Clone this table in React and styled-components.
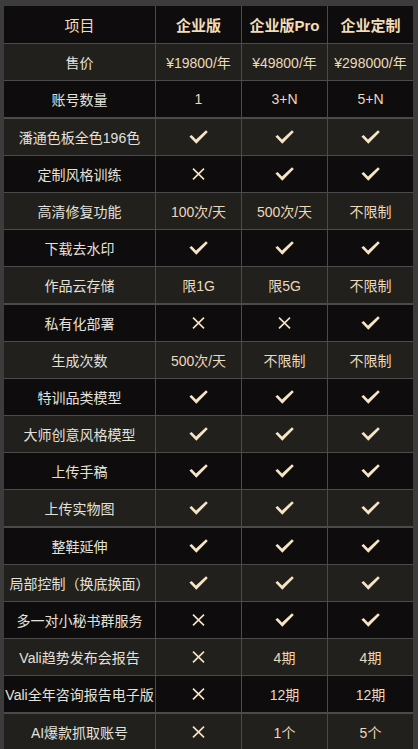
import React from "react";
import styled, { createGlobalStyle } from "styled-components";

const Global = createGlobalStyle`
  html, body {
    margin: 0;
    padding: 0;
    background: #3c3c3c;
  }
  body {
    font-family: "Liberation Sans", "Noto Sans CJK SC", sans-serif;
  }
`;

const Page = styled.div`
  padding: 6px 5px 0 4px;
`;

const Table = styled.div`
  display: flex;
  flex-direction: column;
  row-gap: 1.2px;
  background: #4b4b4b;
`;

const Row = styled.div`
  display: grid;
  grid-template-columns: 151px 85px 85px 85px;
  column-gap: 1px;
  height: ${(p) => (p.$header ? "37px" : "36px")};
`;

const Cell = styled.div`
  display: flex;
  align-items: center;
  justify-content: center;
  white-space: nowrap;
  overflow: visible;
  background: ${(p) => (p.$tone === "light" ? "#21201d" : "#0e0c0d")};
  font-size: 14px;
  color: ${(p) => (p.$label ? "#e4e1db" : "#ead9bb")};
`;

const HeadCell = styled(Cell)`
  background: #0e0c0d;
  color: #f2dcb8;
  font-size: 15px;
  font-weight: ${(p) => (p.$plain ? 400 : 700)};
`;

const Check = () => (
  <svg width="19" height="14" viewBox="0 0 19 14">
    <path
      d="M0.4 6.6 L2.6 4.9 L7 9.6 L17 0.2 L18.8 1.9 L7.3 13.7 Z"
      fill="#f6e4c4"
    />
  </svg>
);

const Cross = () => (
  <svg width="13" height="12" viewBox="0 0 13 12">
    <path
      d="M1 0.6 L12 11.4 M12 0.6 L1 11.4"
      stroke="#f6e4c4"
      strokeWidth="1.6"
      fill="none"
    />
  </svg>
);

const Y = "Y";
const N = "N";

const rows = [
  ["售价", "¥19800/年", "¥49800/年", "¥298000/年"],
  ["账号数量", "1", "3+N", "5+N"],
  ["潘通色板全色196色", Y, Y, Y],
  ["定制风格训练", N, Y, Y],
  ["高清修复功能", "100次/天", "500次/天", "不限制"],
  ["下载去水印", Y, Y, Y],
  ["作品云存储", "限1G", "限5G", "不限制"],
  ["私有化部署", N, N, Y],
  ["生成次数", "500次/天", "不限制", "不限制"],
  ["特训品类模型", Y, Y, Y],
  ["大师创意风格模型", Y, Y, Y],
  ["上传手稿", Y, Y, Y],
  ["上传实物图", Y, Y, Y],
  ["整鞋延伸", Y, Y, Y],
  ["局部控制（换底换面）", Y, Y, Y],
  ["多一对小秘书群服务", N, Y, Y],
  ["Vali趋势发布会报告", N, "4期", "4期"],
  ["Vali全年咨询报告电子版", N, "12期", "12期"],
  ["AI爆款抓取账号", N, "1个", "5个"],
];

const renderValue = (v) => (v === Y ? <Check /> : v === N ? <Cross /> : v);

export default function App() {
  return (
    <Page>
      <Global />
      <Table>
        <Row $header>
          <HeadCell $plain>项目</HeadCell>
          <HeadCell>企业版</HeadCell>
          <HeadCell>企业版Pro</HeadCell>
          <HeadCell>企业定制</HeadCell>
        </Row>
        {rows.map((r, i) => {
          const tone = i % 2 === 0 ? "light" : "dark";
          return (
            <Row key={i}>
              <Cell $tone={tone} $label>
                {r[0]}
              </Cell>
              {r.slice(1).map((v, j) => (
                <Cell key={j} $tone={tone}>
                  {renderValue(v)}
                </Cell>
              ))}
            </Row>
          );
        })}
      </Table>
    </Page>
  );
}
